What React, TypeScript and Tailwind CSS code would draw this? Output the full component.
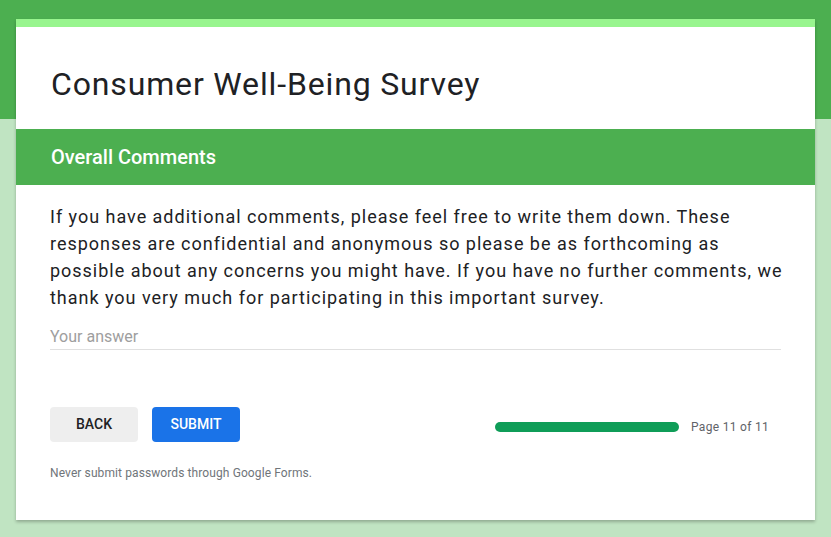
import React from "react";

export default function App() {
  return (
    <div
      className="w-full min-h-[537px] bg-[linear-gradient(#4caf50_0_119px,#c0e4c2_119px)] pt-[19px] px-[16px]"
      style={{ fontFamily: "Roboto, 'Noto Sans', sans-serif" }}
    >
      <div className="bg-white shadow-[0_2px_3px_rgba(0,0,0,0.25)] overflow-hidden">
        <div className="h-[8px] bg-[#98f58e]" />
        <div className="px-[35px] pt-[37px] pb-[25px]">
          <h1 className="text-[32px] leading-[40px] tracking-[0.85px] text-[#202124] font-normal">
            Consumer Well-Being Survey
          </h1>
        </div>
        <div className="h-[56px] bg-[#4caf50] px-[35px] flex items-center">
          <div className="text-white text-[20px] font-medium">Overall Comments</div>
        </div>
        <div className="px-[34px] pt-[18px] pb-[40px]">
          <p className="mr-[-10px] text-[18px] leading-[27px] tracking-[0.98px] text-[#202124]">
            If you have additional comments, please feel free to write them down. These
            responses are confidential and anonymous so please be as forthcoming as
            possible about any concerns you might have. If you have no further comments, we
            thank you very much for participating in this important survey.
          </p>
          <div className="mt-[14px] border-b border-[#e0e0e0] text-[16px] leading-[24px] text-[#9e9e9e]">
            Your answer
          </div>
          <div className="mt-[57px] flex items-center justify-between">
            <div className="flex gap-[14px]">
              <button className="w-[88px] h-[35px] rounded-[4px] bg-[#eeeeee] text-[14px] font-medium text-[#202124]">
                BACK
              </button>
              <button className="w-[88px] h-[35px] rounded-[4px] bg-[#1a73e8] text-[14px] font-medium text-white">
                SUBMIT
              </button>
            </div>
            <div className="flex items-center gap-[12px] mr-[12px] mt-[5px]">
              <div className="w-[184px] h-[10px] rounded-full bg-[#0f9d58]" />
              <div className="text-[12px] tracking-[0.3px] text-[#5f6368]">Page 11 of 11</div>
            </div>
          </div>
          <div className="mt-[24px] text-[12px] leading-[14px] tracking-[0.1px] text-[#70757a]">
            Never submit passwords through Google Forms.
          </div>
        </div>
      </div>
    </div>
  );
}
